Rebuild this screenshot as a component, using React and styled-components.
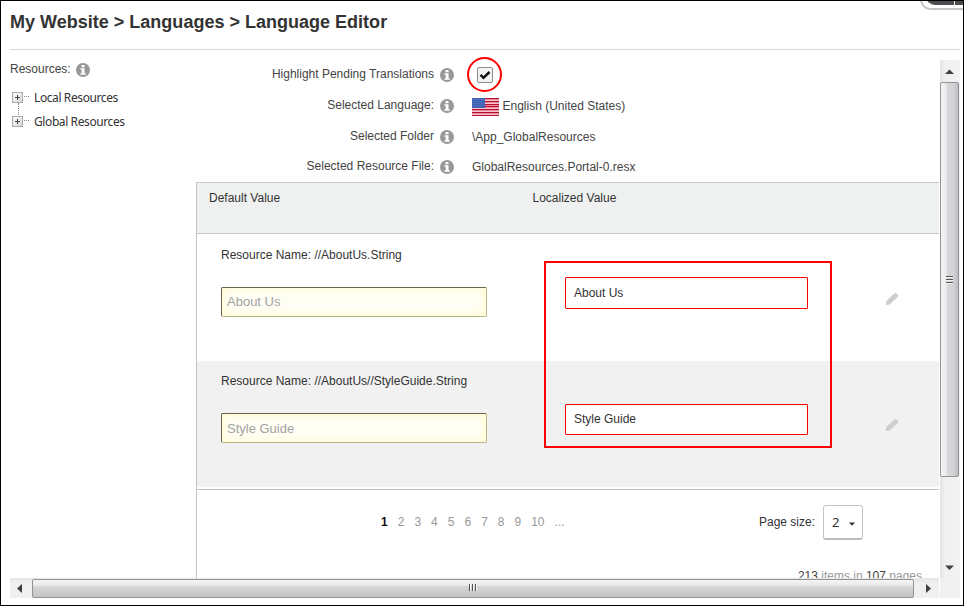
import React from "react";
import styled, { createGlobalStyle, css } from "styled-components";

const GlobalStyle = createGlobalStyle`
  * { box-sizing: border-box; }
  body { margin: 0; background: #fff; }
`;

const Window = styled.div`
  position: relative;
  width: 964px;
  height: 606px;
  border: 1px solid #000;
  padding-left: 9px;
  overflow: hidden;
  background: #fff;
  color: #444;
  font: 12px/16px "Liberation Sans", Arial, sans-serif;
  white-space: nowrap;
`;

const Title = styled.h1`
  width: 950px;
  height: 49px;
  margin: 0;
  padding-top: 9px;
  border-bottom: 1px solid #d9d9d9;
  color: #333;
  font-size: 18px;
  line-height: 24px;
  letter-spacing: 0.01px;
`;

const CloseTab = styled.div`
  position: absolute;
  top: -12px;
  right: -14px;
  display: flex;
  gap: 1px;
  width: 57px;
  height: 21px;
  padding: 0 0 5px 4px;
  overflow: hidden;
  border: 2px solid #c6c6c6;
  border-radius: 12px;
  background: #fff;
`;

const CloseTabPart = styled.div`
  width: ${(p) => p.$width}px;
  height: 14px;
  border-radius: ${(p) => (p.$rounded ? "0 0 0 9px" : "0")};
  background: #4d4b4f;
`;

const Frame = styled.div`
  display: grid;
  grid-template-columns: 930px 20px;
  grid-template-rows: 528px 21px;
  width: 950px;
`;

const Viewport = styled.div`
  display: grid;
  grid-template-columns: 186px 743px;
  height: 528px;
  overflow: hidden;
`;

const Sidebar = styled.aside`
  padding-top: 11px;
`;

const SideHeading = styled.div`
  display: flex;
  gap: 5px;
  height: 24px;
  svg { margin-top: 2px; }
`;

const TreeItem = styled.div`
  position: relative;
  display: flex;
  align-items: center;
  height: 24px;
  padding-left: 2px;
  color: #333;
`;

const TreeLabel = styled.span`
  padding-top: 2px;
  font-family: "Noto Sans", "Open Sans", sans-serif;
  letter-spacing: -0.4px;
`;

const Expander = styled.span`
  display: flex;
  width: 11px;
  height: 11px;
  border: 1px solid #aaa;
  background: linear-gradient(135deg, #fff, #d5d5d5);
`;

const TreeLine = styled.i`
  width: 5px;
  margin: -2px 5px 0 1px;
  border-top: 1px dotted #888;
`;

const TreeStem = styled.i`
  position: absolute;
  left: 8px;
  top: 18px;
  height: 12px;
  border-left: 1px dotted #888;
`;

const Main = styled.main`
  padding-top: 9px;
`;

const FormRow = styled.div`
  display: grid;
  grid-template-columns: 238px 14px auto;
  column-gap: 6px;
  height: ${(p) => p.$height || 31}px;
  padding-top: 7px;
  svg { display: block; }
`;

const FormLabel = styled.label`
  text-align: right;
`;

const IconSlot = styled.span`
  padding-top: 2px;
`;

const FormValue = styled.div`
  display: flex;
  gap: 3.5px;
  padding: 1px 0 0 12px;
`;

const CheckRing = styled.div`
  display: grid;
  place-items: center;
  width: 35px;
  height: 35px;
  margin: -10px 0 0 -5px;
  border: 2px solid #f00;
  border-radius: 50%;
`;

const Checkbox = styled.span`
  display: grid;
  place-items: center;
  width: 16px;
  height: 16px;
  border: 1px solid #8c8c8c;
  border-radius: 2px;
  background: #f3f3f3;
`;

const Table = styled.section`
  position: relative;
  height: 400px;
  border-top: 1px solid #c5c8c8;
  border-left: 1px solid #c3c3c3;
  color: #333;
`;

const columns = css`
  display: grid;
  grid-template-columns: 335px 354px auto;
`;

const TableHead = styled.div`
  ${columns}
  height: 51px;
  padding-top: 7px;
  border-bottom: 1px solid #c5c8c8;
  background: #eff1f1;
`;

const HeadCell = styled.div`
  padding-left: ${(p) => p.$indent}px;
`;

const TableRow = styled.div`
  ${columns}
  height: ${(p) => (p.$shaded ? 126 : 127)}px;
  padding-top: ${(p) => (p.$shaded ? 12 : 13)}px;
  background: ${(p) => (p.$shaded ? "#f1f1f1" : "#fff")};
`;

const DefaultCell = styled.div`
  padding-left: 24px;
`;

const DefaultInput = styled.div`
  width: 266px;
  height: 30px;
  margin-top: 24px;
  padding: ${(p) => (p.$shaded ? 7 : 6)}px 5px 0;
  border: 1px solid;
  border-color: #66634a #b9b582 #b9b582 #66634a;
  border-radius: 2px;
  background: #fffef4;
  box-shadow: inset 0 0 7px 3px #fffbd8;
  color: #a3a3a3;
  font-size: 13px;
  line-height: 16px;
`;

const LocalizedCell = styled.div`
  padding: ${(p) => (p.$shaded ? 31 : 30)}px 0 0 33px;
`;

const LocalizedInput = styled.div`
  width: 243px;
  height: ${(p) => (p.$shaded ? 31 : 32)}px;
  padding: ${(p) => (p.$shaded ? 6 : 7)}px 8px;
  border: 1px solid #f00;
  border-radius: 1px;
  background: linear-gradient(#f3f3f3, #fff 3px) padding-box;
`;

const EditCell = styled.div`
  padding-top: 46px;
`;

const Highlight = styled.div`
  position: absolute;
  left: 347px;
  top: 78px;
  width: 288px;
  height: 187px;
  border: 2px solid #f00;
`;

const Pager = styled.footer`
  height: 91px;
  margin-top: 2px;
  padding-top: 15px;
  border-top: 1px solid #c3c3c3;
`;

const PagerRow = styled.div`
  display: flex;
  height: 35px;
  padding-left: 184px;
  line-height: 35px;
`;

const Pages = styled.div`
  display: flex;
  gap: 10px;
  width: 378px;
  color: #999;
`;

const Page = styled.span`
  color: ${(p) => (p.$current ? "#111" : "inherit")};
  font-weight: ${(p) => (p.$current ? "bold" : "normal")};
`;

const SizeSelect = styled.div`
  display: flex;
  align-items: center;
  gap: 10px;
  width: 40px;
  height: 35px;
  margin-left: 8px;
  padding-left: 9px;
  border: 1px solid #c5c5c5;
  border-bottom: 2px solid #bbb;
  border-radius: 3px;
  font: 13px/16px "Noto Sans", sans-serif;
  svg { margin-top: 3px; }
`;

const SizeValue = styled.span`
  margin: -1px 0 0 -1px;
`;

const Summary = styled.div`
  margin-top: 28px;
  padding-right: 17px;
  text-align: right;
  color: #999;
  b { font-weight: normal; color: #444; }
`;

const VScroll = styled.div`
  display: flex;
  flex-direction: column;
  height: 518px;
  margin-top: 10px;
  background: linear-gradient(90deg, #e3e3e3, #f0f0f0 25%, #f2f2f2);
`;

const VThumb = styled.div`
  display: grid;
  place-items: center;
  width: 19px;
  height: 395px;
  margin-bottom: auto;
  border: 1px solid #929292;
  border-radius: 2px;
  background: linear-gradient(90deg, #f5f5f5, #e9e9eb 35%, #d6d7da 37%, #d2d3d7 75%, #bbbcc2);
`;

const HScroll = styled.div`
  display: flex;
  align-items: center;
  width: 929px;
  height: 20px;
  background: linear-gradient(#e5e5e5, #f0f0f0 25%, #f0f0f0);
`;

const HThumb = styled.div`
  display: grid;
  place-items: center;
  width: 882px;
  height: 19px;
  border: 1px solid #929292;
  border-radius: 2px;
  background: linear-gradient(#f5f5f5, #e7e7e7 35%, #d6d6d8 38%, #c3c3c5);
`;

const ScrollButton = styled.span`
  display: grid;
  place-items: center;
  width: ${(p) => p.$w}px;
  height: ${(p) => p.$h}px;
  padding: 0 ${(p) => p.$end || 0}px 0 ${(p) => p.$start || 0}px;
`;

const Corner = styled.div`
  height: 20px;
  background: #f0f0f0;
`;

const InfoIcon = () => (
  <svg width="14" height="14" viewBox="0 0 14 14">
    <circle cx="7" cy="7" r="7" fill="#989898" />
    <path d="M5.5 2h3v2.3h-3zM4.5 5.3h4v4.9h1.2v1.5H4.4v-1.5h1.3V6.8H4.5z" fill="#fff" />
  </svg>
);

const Flag = () => (
  <svg width="27" height="18" viewBox="0 0 27 18">
    <rect width="27" height="18" fill="#f7c3cd" />
    {[0, 3, 6, 8, 11, 14, 17].map((y) => (
      <rect key={y} y={y} width="27" height="1.3" fill="#b80f32" />
    ))}
    <rect width="13" height="10" fill="#3f63b5" />
    <path d="M1 1.5h12M0 3.5h12M1 5.5h12M0 7.5h12" stroke="#5674bf" strokeDasharray="1 1" />
  </svg>
);

const Pencil = () => (
  <svg width="12" height="12" viewBox="0 0 12 12">
    <path d="M0 12l.4-4L8 .8Q9-.3 10.4.6l1.1 1.1q1 1.2 0 2.3L4 11.3z" fill="#c8c8c8" />
    <path d="M2.3 8.2l5.8-5.5M4.1 9.8l5.8-5.6M7.7 1.3l3.2 3.2M.8 8.1l3 3" stroke="#e4e4e4" strokeWidth=".6" />
  </svg>
);

const Plus = () => (
  <svg width="9" height="9" viewBox="0 0 9 9">
    <path d="M2 4.5h5M4.5 2v5" stroke="#444" />
  </svg>
);

const Check = () => (
  <svg width="12" height="10" viewBox="0 0 12 10">
    <path d="M1.5 4.8L4.5 7.8 10.5 2" fill="none" stroke="#111" strokeWidth="2.5" />
  </svg>
);

const arrowPaths = {
  up: "M0 6L4.5 1.5 9 6z",
  down: "M0 1.5h9L4.5 6z",
  left: "M7 0v9L2 4.5z",
  right: "M2 0v9l5-4.5z",
};

const Arrow = ({ dir }) => {
  const vertical = dir === "up" || dir === "down";
  return (
    <svg width="9" height={vertical ? 7 : 9} viewBox={vertical ? "0 0 9 7" : "0 0 9 9"}>
      <path d={arrowPaths[dir]} fill="#404040" />
    </svg>
  );
};

const Grip = ({ vertical }) => (
  <svg width="8" height="8" viewBox="0 0 8 8">
    <path d={vertical ? "M0 .5h7M0 3.5h7M0 6.5h7" : "M.5 0v7M3.5 0v7M6.5 0v7"} stroke="#555" />
    <path d={vertical ? "M0 1.5h7M0 4.5h7M0 7.5h7" : "M1.5 0v7M4.5 0v7M7.5 0v7"} stroke="#f4f4f4" />
  </svg>
);

const Caret = () => (
  <svg width="6" height="4" viewBox="0 0 6 4">
    <path d="M0 .5h6L3 3.7z" fill="#333" />
  </svg>
);

const Field = ({ label, height, children }) => (
  <FormRow $height={height}>
    <FormLabel>{label}</FormLabel>
    <IconSlot><InfoIcon /></IconSlot>
    <FormValue>{children}</FormValue>
  </FormRow>
);

const ResourceRow = ({ name, value, shaded }) => (
  <TableRow $shaded={shaded}>
    <DefaultCell>
      Resource Name: {name}
      <DefaultInput $shaded={shaded}>{value}</DefaultInput>
    </DefaultCell>
    <LocalizedCell $shaded={shaded}>
      <LocalizedInput $shaded={shaded}>{value}</LocalizedInput>
    </LocalizedCell>
    <EditCell><Pencil /></EditCell>
  </TableRow>
);

export default function App() {
  return (
    <Window>
      <GlobalStyle />
      <Title>My Website &gt; Languages &gt; Language Editor</Title>
      <CloseTab>
        <CloseTabPart $width={29} $rounded />
        <CloseTabPart $width={20} />
      </CloseTab>
      <Frame>
        <Viewport>
          <Sidebar>
            <SideHeading>Resources: <InfoIcon /></SideHeading>
            <TreeItem>
              <Expander><Plus /></Expander><TreeLine /><TreeLabel>Local Resources</TreeLabel>
              <TreeStem />
            </TreeItem>
            <TreeItem>
              <Expander><Plus /></Expander><TreeLine /><TreeLabel>Global Resources</TreeLabel>
            </TreeItem>
          </Sidebar>
          <Main>
            <Field label="Highlight Pending Translations">
              <CheckRing><Checkbox><Check /></Checkbox></CheckRing>
            </Field>
            <Field label="Selected Language:"><Flag /> English (United States)</Field>
            <Field label="Selected Folder" height={30}>\App_GlobalResources</Field>
            <Field label="Selected Resource File:">GlobalResources.Portal-0.resx</Field>
            <Table>
              <TableHead>
                <HeadCell $indent={12}>Default Value</HeadCell>
                <HeadCell $indent={0.5}>Localized Value</HeadCell>
              </TableHead>
              <ResourceRow name="//AboutUs.String" value="About Us" />
              <ResourceRow name="//AboutUs//StyleGuide.String" value="Style Guide" shaded />
              <Highlight />
              <Pager>
                <PagerRow>
                  <Pages>
                    {["1", "2", "3", "4", "5", "6", "7", "8", "9", "10", "..."].map((p) => (
                      <Page key={p} $current={p === "1"}>{p}</Page>
                    ))}
                  </Pages>
                  Page size:
                  <SizeSelect><SizeValue>2</SizeValue><Caret /></SizeSelect>
                </PagerRow>
                <Summary><b>213</b> items in <b>107</b> pages</Summary>
              </Pager>
            </Table>
          </Main>
        </Viewport>
        <VScroll>
          <ScrollButton $w={19} $h={22} $end={1}><Arrow dir="up" /></ScrollButton>
          <VThumb><Grip vertical /></VThumb>
          <ScrollButton $w={19} $h={22} $end={1}><Arrow dir="down" /></ScrollButton>
        </VScroll>
        <HScroll>
          <ScrollButton $w={22} $h={19} $end={4}><Arrow dir="left" /></ScrollButton>
          <HThumb><Grip /></HThumb>
          <ScrollButton $w={25} $h={19} $start={3}><Arrow dir="right" /></ScrollButton>
        </HScroll>
        <Corner />
      </Frame>
    </Window>
  );
}
